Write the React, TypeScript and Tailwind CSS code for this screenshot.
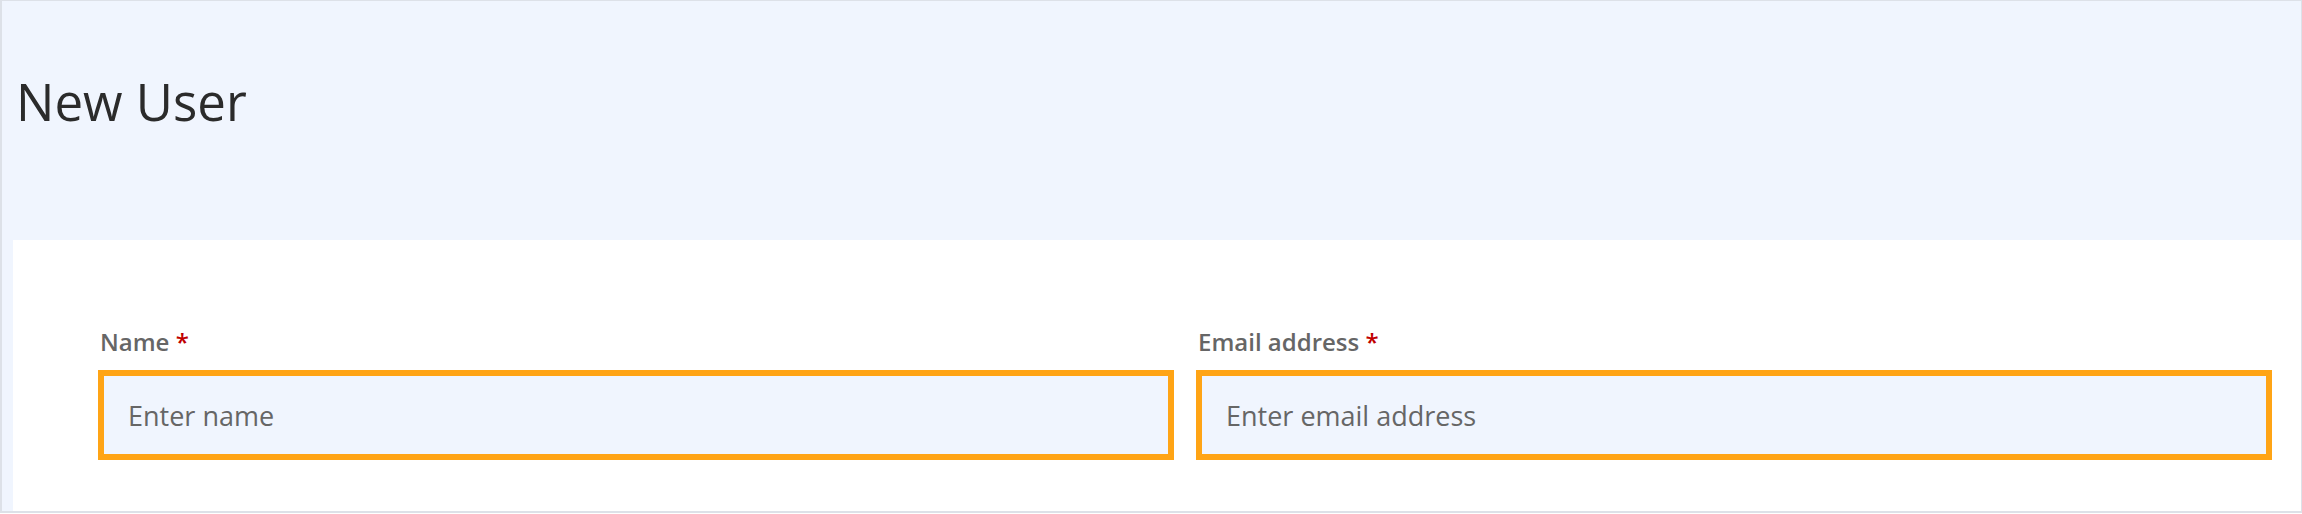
import React from 'react'

export default function App() {
  const fields = [
    { label: 'Name', placeholder: 'Enter name', type: 'text' },
    { label: 'Email address', placeholder: 'Enter email address', type: 'email' },
  ]

  return (
    <div
      className="w-[2302px] h-[513px] bg-[#f0f5fe] border-t border-r border-l-2 border-b-2 border-[#dde1e8] flex flex-col"
      style={{ fontFamily: '"Open Sans", Lato, sans-serif' }}
    >
      {/* Header */}
      <div className="h-[239px] shrink-0 pl-[14px] pt-[66px]">
        <h1 className="text-[51px] leading-[68px] font-normal text-[#2b2b2b]">New User</h1>
      </div>

      {/* Form panel */}
      <div className="flex-1 ml-[11px] bg-white pl-[85px] pr-[29px] pt-[86px]">
        <div className="grid grid-cols-2 gap-x-[22px]">
          {fields.map((f) => (
            <div key={f.label} className="flex flex-col">
              <label className="text-[24px] leading-[32px] font-semibold text-[#666666] mb-[12px] pl-[2px]">
                {f.label} <span className="text-[#c00000]">*</span>
              </label>
              <input
                type={f.type}
                placeholder={f.placeholder}
                className="h-[90px] w-full bg-[#f0f5fe] border-[6px] border-[#ffa415] outline-none px-[24px] text-[27px] text-[#333] placeholder:text-[#666666]"
              />
            </div>
          ))}
        </div>
      </div>
    </div>
  )
}
